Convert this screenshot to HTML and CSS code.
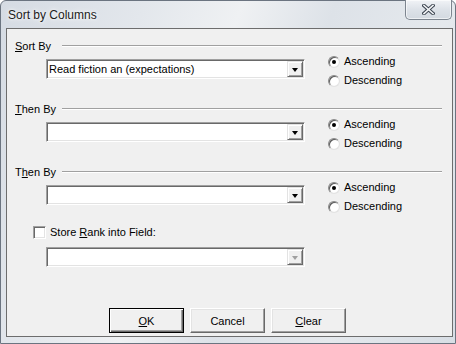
FILE: index.html
```html
<!DOCTYPE html>
<html lang="en">
<head>
<meta charset="UTF-8" />
<title>Sort by Columns</title>
<link rel="stylesheet" href="styles.css">
</head>
<body>

<div class="window">
  <!-- Title bar -->
  <div class="titlebar">
    <span class="title">Sort by Columns</span>
    <div class="close-btn">
      <svg width="13" height="11" viewBox="0 0 13 11">
        <path d="M2 1.5 L11 9.5 M11 1.5 L2 9.5" stroke="#3c4450" stroke-width="3.6" stroke-linecap="square" fill="none"/>
        <path d="M2 1.5 L11 9.5 M11 1.5 L2 9.5" stroke="#f4f6f8" stroke-width="1.6" stroke-linecap="square" fill="none"/>
      </svg>
    </div>
  </div>

  <div class="client">
    <!-- Sort By -->
    <div class="group">
      <div class="group-head"><span class="group-label"><u>S</u>ort By</span><i class="rule"></i></div>
      <div class="group-body">
        <div class="combo"><span class="combo-text">Read fiction an (expectations)</span><span class="drop"><i class="arrow"></i></span></div>
        <div class="radios">
          <div class="radio-row"><span class="radio checked"></span><span>Ascending</span></div>
          <div class="radio-row"><span class="radio"></span><span>Descending</span></div>
        </div>
      </div>
    </div>

    <!-- Then By -->
    <div class="group">
      <div class="group-head"><span class="group-label"><u>T</u>hen By</span><i class="rule"></i></div>
      <div class="group-body">
        <div class="combo"><span class="combo-text"></span><span class="drop"><i class="arrow"></i></span></div>
        <div class="radios">
          <div class="radio-row"><span class="radio checked"></span><span>Ascending</span></div>
          <div class="radio-row"><span class="radio"></span><span>Descending</span></div>
        </div>
      </div>
    </div>

    <!-- Then By -->
    <div class="group">
      <div class="group-head"><span class="group-label">T<u>h</u>en By</span><i class="rule"></i></div>
      <div class="group-body">
        <div class="combo"><span class="combo-text"></span><span class="drop"><i class="arrow"></i></span></div>
        <div class="radios">
          <div class="radio-row"><span class="radio checked"></span><span>Ascending</span></div>
          <div class="radio-row"><span class="radio"></span><span>Descending</span></div>
        </div>
      </div>
    </div>

    <!-- Rank -->
    <div class="rank">
      <div class="check-row"><span class="check"></span><span>Store <u>R</u>ank into Field:</span></div>
      <div class="combo disabled"><span class="combo-text"></span><span class="drop"><i class="arrow"></i></span></div>
    </div>

    <div class="buttons">
      <div class="btn default"><span><u>O</u>K</span></div>
      <div class="btn">Cancel</div>
      <div class="btn"><span><u>C</u>lear</span></div>
    </div>
  </div>
</div>

</body>
</html>
```

FILE: styles.css
```css
body {
  margin: 0;
  font-family: 'Liberation Sans', Arial, sans-serif;
  font-size: 11px;
  color: #000;
}
.window {
  width: 456px;
  height: 344px;
  box-sizing: border-box;
  border: 1px solid #6b7480;
  border-radius: 6px 6px 0 0;
  background: linear-gradient(110deg, #d5dbe3 0%, #e3e7ec 25%, #eff1f3 42%, #dde2e8 58%, #e5e9ed 78%, #d8dee5 100%);
  display: flex;
  flex-direction: column;
}
.titlebar {
  height: 27px;
  display: flex;
  justify-content: space-between;
  align-items: flex-start;
}
.title {
  padding: 7px 0 0 7px;
  font-size: 12px;
  color: #1b1b1b;
  text-shadow: 0 0 6px #fff, 0 0 3px #fff;
}
.close-btn {
  width: 45px;
  height: 19px;
  margin: -1px 3px 0 0;
  border: 1px solid #7d858f;
  border-top: none;
  border-radius: 0 0 5px 5px;
  background: linear-gradient(#f1f3f6, #dde2e8 50%, #d3d9e0);
  box-shadow: inset 0 0 0 1px rgba(255,255,255,0.6);
  display: flex;
  justify-content: center;
  align-items: center;
}
.client {
  width: 447px;
  height: 309px;
  box-sizing: border-box;
  margin-left: 5px;
  border: 1px solid #6d6d6d;
  background: #f0f0f0;
  padding: 11px 10px 3px 8px;
  display: flex;
  flex-direction: column;
}
.group + .group {
  margin-top: 16px;
}
.group-head {
  display: flex;
  align-items: flex-start;
  height: 13px;
  line-height: 13px;
}
.group-label {
  width: 47px;
  flex: none;
}
.rule {
  flex: 1;
  margin-top: 5px;
  border-top: 1px solid #a0a0a0;
  border-bottom: 1px solid #fff;
}
.group-body {
  display: flex;
  align-items: flex-start;
  margin-top: 2px;
}
.combo {
  width: 259px;
  height: 20px;
  box-sizing: border-box;
  margin: 4px 0 0 31px;
  background: #fff;
  border: 1px solid;
  border-color: #a0a0a0 #fff #fff #a0a0a0;
  box-shadow: inset 1px 1px #696969, inset -1px -1px #e3e3e3;
  padding: 1px 1px 1px 2px;
  display: flex;
  align-items: center;
}
.combo-text {
  flex: 1;
  line-height: 16px;
}
.drop {
  width: 16px;
  height: 16px;
  box-sizing: border-box;
  background: #f0f0f0;
  border: 1px solid;
  border-color: #e3e3e3 #696969 #696969 #e3e3e3;
  box-shadow: inset 1px 1px #fff, inset -1px -1px #a0a0a0;
  display: flex;
  justify-content: center;
  align-items: center;
}
.arrow {
  width: 0;
  height: 0;
  margin-top: 1px;
  border-left: 3.5px solid transparent;
  border-right: 3.5px solid transparent;
  border-top: 4px solid #000;
}
.combo.disabled .arrow {
  border-top-color: #a0a0a0;
}
.radios {
  margin-left: 23px;
  display: flex;
  flex-direction: column;
  gap: 6px;
}
.radio-row, .check-row {
  display: flex;
  align-items: center;
  height: 13px;
  line-height: 13px;
}
.radio {
  width: 12px;
  height: 12px;
  box-sizing: border-box;
  margin-right: 4px;
  border-radius: 50%;
  border: 1px solid;
  border-color: #8a8a8a #e2e2e2 #e2e2e2 #8a8a8a;
  background: radial-gradient(circle, #fff 55%, #e8e8e8 100%);
  box-shadow: inset 1px 1px #5a5a5a;
  position: relative;
}
.radio.checked::after {
  content: '';
  position: absolute;
  left: 3px;
  top: 3px;
  width: 4px;
  height: 4px;
  border-radius: 50%;
  background: #000;
}
.rank {
  margin-top: 13px;
}
.check-row {
  margin-left: 18px;
}
.check {
  width: 13px;
  height: 13px;
  box-sizing: border-box;
  margin-right: 4px;
  background: #fff;
  border: 1px solid;
  border-color: #a0a0a0 #fff #fff #a0a0a0;
  box-shadow: inset 1px 1px #696969, inset -1px -1px #e3e3e3;
}
.rank .combo {
  margin-top: 8px;
}
.buttons {
  margin-top: auto;
  display: flex;
  justify-content: center;
  gap: 6px;
  padding-right: 2px;
}
.btn {
  width: 75px;
  height: 25px;
  box-sizing: border-box;
  background: #f0f0f0;
  border: 1px solid;
  border-color: #fff #696969 #696969 #fff;
  box-shadow: inset -1px -1px #a0a0a0, inset 1px 1px #e3e3e3;
  display: flex;
  justify-content: center;
  align-items: center;
}
.btn.default {
  border: 1px solid #000;
  box-shadow: inset 1px 1px #fff, inset -1px -1px #696969, inset -2px -2px #a0a0a0;
}
```
